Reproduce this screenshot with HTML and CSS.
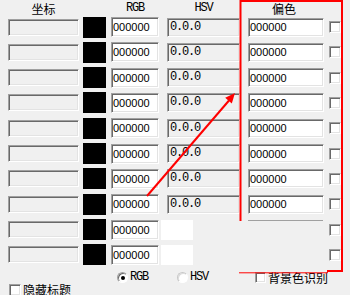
FILE: index.html
```html
<!DOCTYPE html>
<html lang="zh">
<head>
    <meta charset="UTF-8">
    <title>取色</title>
    <link rel="stylesheet" href="styles.css">
</head>
<body>
    <div class="panel">
        <div class="head">
            <div class="h-coord cjk">坐标</div>
            <div></div>
            <div class="h-rgb latin">RGB</div>
            <div class="h-hsv latin">HSV</div>
            <div class="h-off cjk">偏色</div>
            <div></div>
        </div>

        <div class="rows">
            <div class="coord sunken"></div><div class="swatch"></div><div class="rgb field sunken">000000</div><div class="hsv sunken">0.0.0</div><div class="off field sunken">000000</div><div class="check sunken"></div>
            <div class="coord sunken"></div><div class="swatch"></div><div class="rgb field sunken">000000</div><div class="hsv sunken">0.0.0</div><div class="off field sunken">000000</div><div class="check sunken"></div>
            <div class="coord sunken"></div><div class="swatch"></div><div class="rgb field sunken">000000</div><div class="hsv sunken">0.0.0</div><div class="off field sunken">000000</div><div class="check sunken"></div>
            <div class="coord sunken"></div><div class="swatch"></div><div class="rgb field sunken">000000</div><div class="hsv sunken">0.0.0</div><div class="off field sunken">000000</div><div class="check sunken"></div>
            <div class="coord sunken"></div><div class="swatch"></div><div class="rgb field sunken">000000</div><div class="hsv sunken">0.0.0</div><div class="off field sunken">000000</div><div class="check sunken"></div>
            <div class="coord sunken"></div><div class="swatch"></div><div class="rgb field sunken">000000</div><div class="hsv sunken">0.0.0</div><div class="off field sunken">000000</div><div class="check sunken"></div>
            <div class="coord sunken"></div><div class="swatch"></div><div class="rgb field sunken">000000</div><div class="hsv sunken">0.0.0</div><div class="off field sunken">000000</div><div class="check sunken"></div>
            <div class="coord sunken"></div><div class="swatch"></div><div class="rgb field sunken">000000</div><div class="hsv sunken">0.0.0</div><div class="off field sunken">000000</div><div class="check sunken"></div>
            <div class="coord sunken"></div><div class="swatch"></div><div class="rgb field sunken">000000</div><div class="blank"></div><div class="stub"></div><div class="check sunken"></div>
            <div class="coord sunken"></div><div class="swatch"></div><div class="rgb field sunken">000000</div><div class="blank"></div><div></div><div class="check sunken"></div>
        </div>

        <div class="foot">
            <div class="radio on"></div><span class="latin r-label">RGB</span>
            <div class="radio off-radio"></div><span class="latin r-label">HSV</span>
            <div class="check sunken bg-check"></div><span class="cjk c-label">背景色识别</span>
        </div>
        <div class="foot2">
            <div class="check sunken"></div><span class="cjk c-label">隐藏标题</span>
        </div>
    </div>

    <!-- red annotation drawn over the window -->
    <svg class="marks" width="350" height="295" viewBox="0 0 350 295">
        <g stroke="#ff0000" fill="none">
            <line x1="240" y1="1" x2="343" y2="1" stroke-width="2"/>
            <line x1="240.5" y1="0" x2="240.5" y2="221" stroke-width="2"/>
            <line x1="342" y1="0" x2="342" y2="272" stroke-width="2"/>
            <polyline points="239,272.8 327.5,272.8 327.5,270.5" stroke-width="1"/>
            <line x1="327" y1="271" x2="343" y2="271" stroke-width="2"/>
            <line x1="147" y1="196" x2="229" y2="100.5" stroke-width="2"/>
        </g>
        <polygon points="235,93 231.8,103.4 225.2,97.8" fill="#ff0000"/>
    </svg>
</body>
</html>
```

FILE: styles.css
```css
body {
    margin: 0;
    width: 350px;
    height: 295px;
    overflow: hidden;
    position: relative;
    background-color: #f0f0f0;
    color: #000;
    font-family: "Liberation Sans", Arial, sans-serif;
}
.cjk {
    font-family: "Noto Sans CJK SC", sans-serif;
    font-size: 12px;
}
.latin {
    font-family: "Liberation Mono", monospace;
    font-size: 12px;
    letter-spacing: -1.2px;
}
.head,
.rows {
    display: grid;
    grid-template-columns: 75px 28px 56px 81px 81px 12px;
    padding-left: 8px;
}
.head {
    height: 17px;
    line-height: 17px;
    align-items: center;
}
.h-coord { width: 71px; text-align: center; }
.h-rgb { width: 48px; text-align: center; }
.h-hsv { width: 73px; text-align: center; }
.h-off { width: 72px; text-align: center; }

.rows {
    grid-template-rows: repeat(10, 20px);
    row-gap: 5.33px;
    align-items: center;
}
.sunken {
    box-sizing: border-box;
    border: 1px solid;
    border-color: #a0a0a0 #ffffff #ffffff #a0a0a0;
    box-shadow: inset 1px 1px #696969, inset -1px -1px #e3e3e3;
}
.coord {
    width: 71px;
    height: 17px;
}
.swatch {
    width: 23px;
    height: 21px;
    background-color: #000;
}
.field {
    background-color: #fff;
    font-size: 11px;
    padding-left: 1px;
    display: flex;
    align-items: center;
}
.rgb {
    width: 48px;
    height: 20px;
}
.off {
    width: 76px;
    height: 19px;
}
.hsv {
    width: 73px;
    height: 19px;
    padding-left: 2px;
    font-family: "Liberation Mono", monospace;
    font-size: 12px;
    letter-spacing: -1.2px;
    line-height: 17px;
}
.blank {
    width: 32px;
    height: 20px;
    margin-left: -6px;
    background-color: #fff;
}
.stub {
    width: 75px;
    height: 20px;
    box-sizing: border-box;
    border-top: 1px solid #a0a0a0;
}
.check {
    width: 12px;
    height: 12px;
    background-color: #fff;
}
.foot {
    display: flex;
    align-items: center;
    height: 13px;
    margin-top: 6px;
}
.radio {
    box-sizing: border-box;
    width: 11px;
    height: 11px;
    border-radius: 50%;
    background-color: #fff;
    border: 1px solid;
    position: relative;
}
.radio.on {
    margin-left: 117px;
    border-color: #a0a0a0 #ffffff #ffffff #a0a0a0;
    box-shadow: inset 1px 1px #696969;
}
.radio.on::after {
    content: "";
    position: absolute;
    left: 3px;
    top: 3px;
    width: 4px;
    height: 4px;
    border-radius: 50%;
    background-color: #000;
}
.off-radio {
    margin-left: 29px;
    border-color: #c8c8c8 #ffffff #ffffff #c8c8c8;
    box-shadow: inset 1px 1px #dcdcdc;
}
.r-label {
    margin-left: 2px;
    line-height: 13px;
}
.bg-check {
    margin-left: 47px;
    width: 11px;
    height: 11px;
}
.c-label {
    margin-left: 2px;
    line-height: 13px;
}
.foot2 {
    display: flex;
    align-items: center;
    height: 12px;
    padding-left: 9px;
}
.foot2 .c-label {
    line-height: 12px;
}
.marks {
    position: absolute;
    left: 0;
    top: 0;
    pointer-events: none;
}
```
